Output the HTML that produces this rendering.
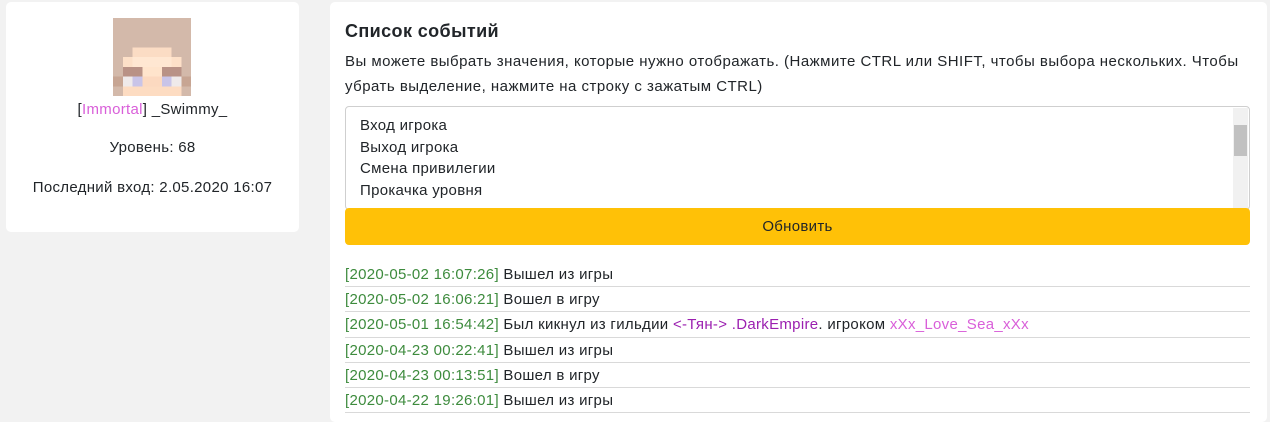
<!DOCTYPE html>
<html><head><meta charset="utf-8"><style>
*{margin:0;padding:0;box-sizing:border-box}
body{width:1270px;height:412px;overflow:hidden;background:#f2f2f2;font-family:"Liberation Sans","DejaVu Sans",sans-serif;color:#212529;font-size:15px;letter-spacing:0.3px;position:relative}
.card{position:absolute;background:#fff;border-radius:5px}
.t{position:absolute;white-space:nowrap;line-height:18px}
.c{left:0;right:0;text-align:center}
.row{position:absolute;left:345px;width:905px;height:25px;border-bottom:1px solid #d9d9d9}
.row span.t{left:0;top:4px}
.g{color:#3d8b3d}.p{color:#9b1fb0}.m{color:#d95fd9}
</style></head><body>
<div class="card" style="left:6px;top:2px;width:293px;height:230px">
<svg style="position:absolute;left:107px;top:16px" width="78" height="78" viewBox="0 0 8 8" shape-rendering="crispEdges">
<rect width="8" height="8" fill="#d3b9aa"/>
<rect x="2" y="3" width="4" height="1" fill="#fbdcc4"/>
<rect x="1" y="4" width="6" height="1" fill="#fde0c8"/>
<rect x="2" y="4" width="4" height="1" fill="#ffe7d2"/>
<rect x="1" y="5" width="6" height="1" fill="#b99286"/>
<rect x="3" y="5" width="2" height="1" fill="#ffe4cc"/>
<rect x="0" y="6" width="1" height="1" fill="#c7a593"/>
<rect x="7" y="6" width="1" height="1" fill="#c7a593"/>
<rect x="1" y="6" width="1" height="1" fill="#efeaea"/>
<rect x="6" y="6" width="1" height="1" fill="#efeaea"/>
<rect x="2" y="6" width="1" height="1" fill="#c9c4e8"/>
<rect x="5" y="6" width="1" height="1" fill="#c9c4e8"/>
<rect x="3" y="6" width="2" height="1" fill="#fcd9c0"/>
<rect x="1" y="7" width="6" height="1" fill="#fddcc2"/>
</svg>
<span class="t c" style="top:99px">[<span class="m">Immortal</span>] _Swimmy_</span>
<span class="t c" style="top:137px">Уровень: 68</span>
<span class="t c" style="top:177px">Последний вход: 2.05.2020 16:07</span>
</div>
<div class="card" style="left:330px;top:2px;width:937px;height:420px"></div>
<span class="t" style="left:345px;top:20px;font-size:18px;font-weight:bold;line-height:22px;letter-spacing:0.4px">Список событий</span>
<span class="t" style="left:345px;top:53px;letter-spacing:0.48px">Вы можете выбрать значения, которые нужно отображать. (Нажмите CTRL или SHIFT, чтобы выбора нескольких. Чтобы</span>
<span class="t" style="left:345px;top:78px;letter-spacing:0.48px">убрать выделение, нажмите на строку с зажатым CTRL)</span>
<div style="position:absolute;left:345px;top:106px;width:905px;height:104px;border:1px solid #cfcfcf;border-radius:4px;background:#fff">
<div style="position:absolute;right:1px;top:1px;width:15px;bottom:1px;background:#f1f1f1"></div>
<div style="position:absolute;right:2px;top:18px;width:13px;height:31px;background:#c1c1c1"></div>
<span class="t" style="left:14px;top:10px">Вход игрока</span>
<span class="t" style="left:14px;top:32px">Выход игрока</span>
<span class="t" style="left:14px;top:53px">Смена привилегии</span>
<span class="t" style="left:14px;top:75px">Прокачка уровня</span>
</div>
<div style="position:absolute;left:345px;top:208px;width:905px;height:37px;background:#ffc107;border-radius:4px;text-align:center;line-height:37px">Обновить</div>
<div class="row" style="top:262px"><span class="t"><span class="g">[2020-05-02 16:07:26]</span> Вышел из игры</span></div>
<div class="row" style="top:287px"><span class="t"><span class="g">[2020-05-02 16:06:21]</span> Вошел в игру</span></div>
<div class="row" style="top:312px;height:26px"><span class="t"><span class="g">[2020-05-01 16:54:42]</span> Был кикнул из гильдии <span class="p">&lt;-Тян-&gt; .DarkEmpire</span>. игроком <span class="m">xXx_Love_Sea_xXx</span></span></div>
<div class="row" style="top:338px"><span class="t"><span class="g">[2020-04-23 00:22:41]</span> Вышел из игры</span></div>
<div class="row" style="top:363px"><span class="t"><span class="g">[2020-04-23 00:13:51]</span> Вошел в игру</span></div>
<div class="row" style="top:388px"><span class="t"><span class="g">[2020-04-22 19:26:01]</span> Вышел из игры</span></div>
</body></html>
